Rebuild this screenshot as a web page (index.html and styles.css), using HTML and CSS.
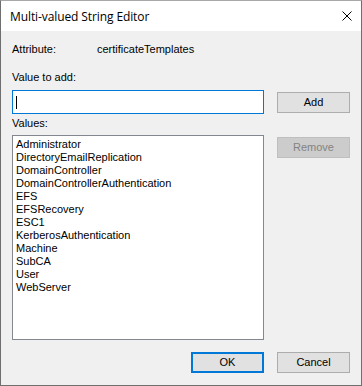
FILE: index.html
```html
<!DOCTYPE html>
<html>
<head>
<meta charset="utf-8">
<link rel="stylesheet" href="styles.css">
</head>
<body>
<div class="window">
  <div class="titlebar">
    <span class="title">Multi-valued String Editor</span>
    <svg class="close" width="10" height="10" viewBox="0 0 10 10"><path d="M0.5 0.5L9.5 9.5M9.5 0.5L0.5 9.5" stroke="#000" stroke-width="1" fill="none"/></svg>
  </div>
  <div class="content">
    <div class="attr"><span class="attr-label">Attribute:</span><span>certificateTemplates</span></div>
    <div class="label first">Value to add:</div>
    <div class="row input-row">
      <div class="input"><span class="caret"></span></div>
      <div class="btn add">Add</div>
    </div>
    <div class="label values">Values:</div>
    <div class="row list-row">
      <div class="list">
        <div>Administrator</div>
        <div>DirectoryEmailReplication</div>
        <div>DomainController</div>
        <div>DomainControllerAuthentication</div>
        <div>EFS</div>
        <div>EFSRecovery</div>
        <div>ESC1</div>
        <div>KerberosAuthentication</div>
        <div>Machine</div>
        <div>SubCA</div>
        <div>User</div>
        <div>WebServer</div>
      </div>
      <div class="btn disabled">Remove</div>
    </div>
    <div class="footer">
      <div class="btn default">OK</div>
      <div class="btn">Cancel</div>
    </div>
  </div>
</div>
</body>
</html>
```
FILE: styles.css
```css
html, body { margin: 0; padding: 0; background: #ffffff; }
.window {
  width: 362px; height: 386px; box-sizing: border-box;
  border: 1px solid #6f6f6f; border-top-color: #a8a8a8;
  background: #f0f0f0;
  font-family: "Liberation Sans", Arial, sans-serif; font-size: 11px; color: #000;
}
.titlebar {
  height: 30px; background: #fff; display: flex; align-items: center;
  padding: 0 9px 0 9px; justify-content: space-between;
}
.title { font-family: "Open Sans", "Noto Sans", sans-serif; font-size: 12px; color: #000; letter-spacing: -0.1px; }
.content { padding: 0 11px; }
.attr { margin-top: 12px; line-height: 13px; display: flex; }
.attr-label { width: 85px; }
.label { line-height: 13px; }
.label.first { margin-top: 15px; }
.label.values { margin-top: 3px; }
.row { display: grid; grid-template-columns: 252px 73px; column-gap: 13px; align-items: start; }
.input-row { margin-top: 6px; }
.input {
  height: 24px; box-sizing: border-box; border: 1px solid #0078d7; background: #fff;
  display: flex; align-items: center; padding-left: 3px;
}
.caret { width: 1px; height: 13px; background: #000; }
.btn {
  height: 21px; box-sizing: border-box; border: 1px solid #adadad; background: #e1e1e1;
  display: flex; align-items: center; justify-content: center; line-height: 13px;
}
.add { margin-top: 2px; }
.list-row { margin-top: 5px; }
.list {
  height: 205px; box-sizing: border-box; border: 1px solid #828790; background: #fff;
  padding: 2px 0 0 3px; line-height: 13px;
}
.disabled { margin-top: 2px; background: #cccccc; border-color: #bfbfbf; color: #838383; }
.footer { margin-top: 12px; display: flex; justify-content: flex-end; gap: 13px; width: 338px; }
.footer .btn { width: 73px; }
.default { border: 2px solid #0078d7; }
```
